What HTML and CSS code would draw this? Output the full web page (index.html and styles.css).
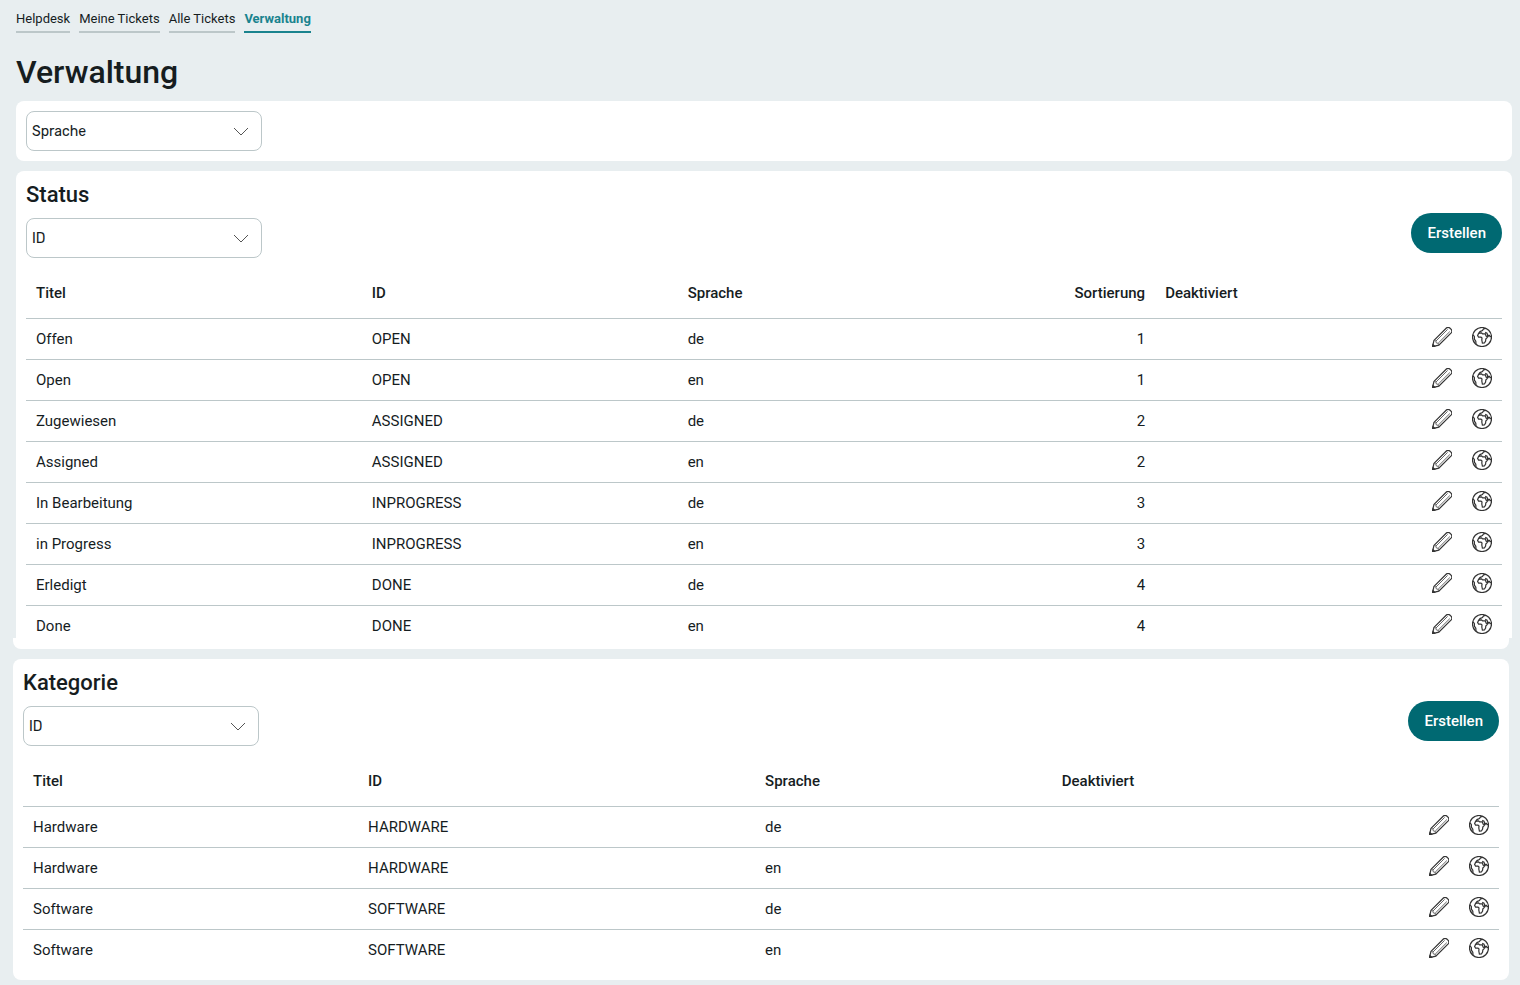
FILE: index.html
```html
<!DOCTYPE html>
<html lang="de">
<head>
<meta charset="utf-8">
<meta name="viewport" content="width=device-width, initial-scale=1">
<title>Helpdesk – Verwaltung</title>
<link rel="stylesheet" href="styles.css">
</head>
<body>
<svg class="sprite" aria-hidden="true">
  <symbol id="pencil" viewBox="0 0 20 20">
    <path d="M2 13.4 14.4 1Q16-.4 17.8 1L19.2 2.4Q20.6 4.2 19.2 5.8L6.8 18.2.5 19.7Z" />
    <path class="fine" d="M2 13.4 3.8 13.8 4.3 15.9 6.3 16.4 6.8 18.2M4 14 15.6 2.4M6.2 16.2 17.8 4.6" />
    <path class="solid" d="M.5 19.7 1 17.6 2.6 19.2Z" />
  </symbol>
  <symbol id="globe" viewBox="0 0 20 20">
    <circle cx="10" cy="10" r="9.5" />
    <path d="M5.6 8.4 6.6 6.4 9.6 5.8 10.6 6.8 13.2 6.8 14.2 9.2 16 9.6 13.8 12 13.6 14 12.4 16 10.4 16.2 9.8 13 10 11 9 10.2 6.6 10.2ZM6.6 6.4 8 4.6 10.4 3.6 11.6 1.8 14 1.4M13.2 5.4 15 6.2 15.8 8.4 17.4 8.4 18.2 9.8 19.4 9.2M1 7.6 2.4 9.6 2.4 12.2 3.8 14.2 4 17.2" />
  </symbol>
</svg>

<div class="page">
  <nav class="tabs" aria-label="Bereiche">
    <a class="tab" href="#helpdesk">Helpdesk</a>
    <a class="tab" href="#meine">Meine Tickets</a>
    <a class="tab" href="#alle">Alle Tickets</a>
    <a class="tab tab-active" href="#verwaltung" aria-current="page">Verwaltung</a>
  </nav>
  <h1 class="page-title">Verwaltung</h1>

  <div class="panel">
    <div class="picker">
      <select class="picker-field" aria-label="Sprache"><option>Sprache</option></select>
      <svg class="chevron" viewBox="0 0 16 9" aria-hidden="true"><path d="M1 1 8 8 15 1" /></svg>
    </div>
  </div>

  <section class="panel panel-open">
    <h2 class="panel-title">Status</h2>
    <div class="toolbar">
      <div class="picker">
        <select class="picker-field" aria-label="Status filtern"><option>ID</option></select>
        <svg class="chevron" viewBox="0 0 16 9" aria-hidden="true"><path d="M1 1 8 8 15 1" /></svg>
      </div>
      <button class="create" type="button">Erstellen</button>
    </div>
    <table class="list status-list">
      <colgroup><col class="s-title"><col class="s-id"><col class="s-lang"><col class="s-sort"><col><col class="c-icon"><col class="c-icon"></colgroup>
      <thead><tr><th>Titel</th><th>ID</th><th>Sprache</th><th class="num">Sortierung</th><th>Deaktiviert</th><th></th><th></th></tr></thead>
      <tbody>
        <tr><td>Offen</td><td>OPEN</td><td>de</td><td class="num">1</td><td></td><td class="act"><button class="icon-btn" type="button" aria-label="Bearbeiten"><svg class="icon"><use href="#pencil"/></svg></button></td><td class="act"><button class="icon-btn" type="button" aria-label="Übersetzen"><svg class="icon"><use href="#globe"/></svg></button></td></tr>
        <tr><td>Open</td><td>OPEN</td><td>en</td><td class="num">1</td><td></td><td class="act"><button class="icon-btn" type="button" aria-label="Bearbeiten"><svg class="icon"><use href="#pencil"/></svg></button></td><td class="act"><button class="icon-btn" type="button" aria-label="Übersetzen"><svg class="icon"><use href="#globe"/></svg></button></td></tr>
        <tr><td>Zugewiesen</td><td>ASSIGNED</td><td>de</td><td class="num">2</td><td></td><td class="act"><button class="icon-btn" type="button" aria-label="Bearbeiten"><svg class="icon"><use href="#pencil"/></svg></button></td><td class="act"><button class="icon-btn" type="button" aria-label="Übersetzen"><svg class="icon"><use href="#globe"/></svg></button></td></tr>
        <tr><td>Assigned</td><td>ASSIGNED</td><td>en</td><td class="num">2</td><td></td><td class="act"><button class="icon-btn" type="button" aria-label="Bearbeiten"><svg class="icon"><use href="#pencil"/></svg></button></td><td class="act"><button class="icon-btn" type="button" aria-label="Übersetzen"><svg class="icon"><use href="#globe"/></svg></button></td></tr>
        <tr><td>In Bearbeitung</td><td>INPROGRESS</td><td>de</td><td class="num">3</td><td></td><td class="act"><button class="icon-btn" type="button" aria-label="Bearbeiten"><svg class="icon"><use href="#pencil"/></svg></button></td><td class="act"><button class="icon-btn" type="button" aria-label="Übersetzen"><svg class="icon"><use href="#globe"/></svg></button></td></tr>
        <tr><td>in Progress</td><td>INPROGRESS</td><td>en</td><td class="num">3</td><td></td><td class="act"><button class="icon-btn" type="button" aria-label="Bearbeiten"><svg class="icon"><use href="#pencil"/></svg></button></td><td class="act"><button class="icon-btn" type="button" aria-label="Übersetzen"><svg class="icon"><use href="#globe"/></svg></button></td></tr>
        <tr><td>Erledigt</td><td>DONE</td><td>de</td><td class="num">4</td><td></td><td class="act"><button class="icon-btn" type="button" aria-label="Bearbeiten"><svg class="icon"><use href="#pencil"/></svg></button></td><td class="act"><button class="icon-btn" type="button" aria-label="Übersetzen"><svg class="icon"><use href="#globe"/></svg></button></td></tr>
        <tr><td>Done</td><td>DONE</td><td>en</td><td class="num">4</td><td></td><td class="act"><button class="icon-btn" type="button" aria-label="Bearbeiten"><svg class="icon"><use href="#pencil"/></svg></button></td><td class="act"><button class="icon-btn" type="button" aria-label="Übersetzen"><svg class="icon"><use href="#globe"/></svg></button></td></tr>
      </tbody>
    </table>
  </section>
</div>

<div class="page page-lower">
  <div class="panel-end"></div>
  <section class="panel">
    <h2 class="panel-title">Kategorie</h2>
    <div class="toolbar">
      <div class="picker">
        <select class="picker-field" aria-label="Kategorie filtern"><option>ID</option></select>
        <svg class="chevron" viewBox="0 0 16 9" aria-hidden="true"><path d="M1 1 8 8 15 1" /></svg>
      </div>
      <button class="create" type="button">Erstellen</button>
    </div>
    <table class="list">
      <colgroup><col class="k-title"><col class="k-id"><col class="k-lang"><col><col class="c-icon"><col class="c-icon"></colgroup>
      <thead><tr><th>Titel</th><th>ID</th><th>Sprache</th><th>Deaktiviert</th><th></th><th></th></tr></thead>
      <tbody>
        <tr><td>Hardware</td><td>HARDWARE</td><td>de</td><td></td><td class="act"><button class="icon-btn" type="button" aria-label="Bearbeiten"><svg class="icon"><use href="#pencil"/></svg></button></td><td class="act"><button class="icon-btn" type="button" aria-label="Übersetzen"><svg class="icon"><use href="#globe"/></svg></button></td></tr>
        <tr><td>Hardware</td><td>HARDWARE</td><td>en</td><td></td><td class="act"><button class="icon-btn" type="button" aria-label="Bearbeiten"><svg class="icon"><use href="#pencil"/></svg></button></td><td class="act"><button class="icon-btn" type="button" aria-label="Übersetzen"><svg class="icon"><use href="#globe"/></svg></button></td></tr>
        <tr><td>Software</td><td>SOFTWARE</td><td>de</td><td></td><td class="act"><button class="icon-btn" type="button" aria-label="Bearbeiten"><svg class="icon"><use href="#pencil"/></svg></button></td><td class="act"><button class="icon-btn" type="button" aria-label="Übersetzen"><svg class="icon"><use href="#globe"/></svg></button></td></tr>
        <tr><td>Software</td><td>SOFTWARE</td><td>en</td><td></td><td class="act"><button class="icon-btn" type="button" aria-label="Bearbeiten"><svg class="icon"><use href="#pencil"/></svg></button></td><td class="act"><button class="icon-btn" type="button" aria-label="Übersetzen"><svg class="icon"><use href="#globe"/></svg></button></td></tr>
      </tbody>
    </table>
  </section>
</div>
</body>
</html>
```
FILE: styles.css
```css
* { box-sizing: border-box; }

body {
  margin: 0;
  background: #e8eef0;
  color: #161d1f;
  font: 15px/20px Roboto, "Liberation Sans", sans-serif;
}

.sprite { position: absolute; width: 0; height: 0; }

.page { padding: 9px 8px 0 16px; }
.page-lower { padding: 0 11px 5px 13px; }

/* Navigation */
.tabs { display: flex; gap: 9px; }
.tab {
  padding-bottom: 2px;
  border-bottom: 2px solid #bcc7c9;
  color: inherit;
  font-size: 13px;
  text-decoration: none;
}
.tab-active { border-color: #1a838e; color: #1a838e; font-weight: 700; }

.page-title {
  margin: 19px 0 9px;
  font-size: 32px;
  font-weight: 500;
  line-height: 40px;
}

/* Panels */
.panel { padding: 10px; border-radius: 8px; background: #fff; }
.panel + .panel { margin-top: 10px; }
.panel-open { padding-bottom: 0; border-radius: 8px 8px 0 0; }
.panel-end {
  height: 11px;
  margin-bottom: 10px;
  border-radius: 0 0 8px 8px;
  background: #fff;
}
.panel-title { margin: 0 0 5px; font-size: 22px; font-weight: 500; line-height: 27px; }

.toolbar {
  display: flex;
  justify-content: space-between;
  align-items: flex-start;
  height: 45px;
  margin-bottom: 10px;
}
.toolbar .picker { align-self: flex-end; }

.picker { display: grid; width: 236px; height: 40px; align-items: center; }
.picker-field {
  grid-area: 1 / 1;
  width: 100%;
  height: 40px;
  padding: 2px 5px 0;
  border: 1px solid #bcc7c9;
  border-radius: 8px;
  appearance: none;
  background: #fff;
  color: inherit;
  font: 14px/20px Rubik, Inter, Roboto, sans-serif;
}
.chevron {
  grid-area: 1 / 1;
  justify-self: end;
  width: 16px;
  height: 9px;
  margin-right: 13px;
  fill: none;
  stroke: #555;
  pointer-events: none;
}

.create {
  height: 40px;
  padding: 0 16px;
  border: 0;
  border-radius: 20px;
  background: #006972;
  color: #fff;
  font: 500 15px/20px Roboto, "Liberation Sans", sans-serif;
}

/* Lists */
.list { width: 100%; border-collapse: separate; border-spacing: 0; table-layout: fixed; }
.list th { height: 51px; padding: 0 10px; border-bottom: 1px solid #bcc7c9; font-weight: 500; text-align: left; }
.list td { padding: 10px; border-bottom: 1px solid #bcc7c9; }
.list tr:last-child td { border-bottom: 0; }
.list thead tr:last-child th { border-bottom: 1px solid #bcc7c9; }
.list .num { text-align: right; }
.list .act { padding: 8px 10px 0; vertical-align: top; }
.status-list tr:last-child td { padding-bottom: 2px; }

.s-title { width: 22.75%; }
.s-id { width: 21.4%; }
.s-lang { width: 22%; }
.s-sort { width: 10.35%; }
.k-title { width: 22.7%; }
.k-id { width: 26.9%; }
.k-lang { width: 20.1%; }
.c-icon { width: 40px; }

.icon-btn { display: block; width: 20px; height: 20px; padding: 0; border: 0; background: none; color: #333; }
.icon { display: block; width: 20px; height: 20px; fill: none; stroke: currentColor; stroke-width: 1.2; overflow: visible; }
.fine { stroke: #666; stroke-width: 1; }
.solid { fill: currentColor; }
```
